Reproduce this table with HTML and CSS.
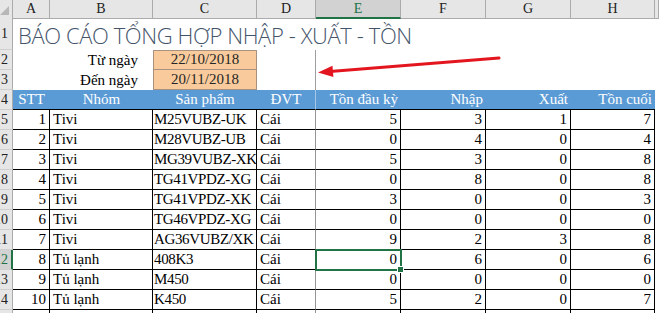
FILE: index.html
```html
<!DOCTYPE html>
<html lang="vi">
<head>
<meta charset="utf-8">
<title>Báo cáo tổng hợp</title>
<link rel="stylesheet" href="styles.css">
</head>
<body>
<div class="sheet">
  <div class="row r-hdr">
    <div class="corner"><svg class="corner-tri" width="13" height="18" viewBox="0 0 13 18"><polygon points="0,15 9,6 9,15" fill="#b7b7b7"/></svg></div>
    <div class="ch">A</div>
    <div class="ch">B</div>
    <div class="ch">C</div>
    <div class="ch">D</div>
    <div class="ch sel">E</div>
    <div class="ch">F</div>
    <div class="ch">G</div>
    <div class="ch">H</div>
    <div class="ch"></div>
  </div>

  <div class="row r-title">
    <div class="rh">1</div>
    <div class="title">BÁO CÁO TỔNG HỢP NHẬP - XUẤT - TỒN</div>
    <div class="blank"></div>
  </div>

  <div class="row">
    <div class="rh">2</div>
    <div class="blank"></div>
    <div class="label">Từ ngày</div>
    <div class="date date-top">22/10/2018</div>
    <div class="blank freeze"></div>
    <div class="blank"></div><div class="blank"></div><div class="blank"></div><div class="blank"></div><div class="blank"></div>
  </div>

  <div class="row">
    <div class="rh">3</div>
    <div class="blank"></div>
    <div class="label">Đến ngày</div>
    <div class="date">20/11/2018</div>
    <div class="blank freeze"></div>
    <div class="blank"></div><div class="blank"></div><div class="blank"></div><div class="blank"></div><div class="blank"></div>
  </div>

  <div class="row r-head">
    <div class="rh">4</div>
    <div class="th ctr">STT</div>
    <div class="th ctr">Nhóm</div>
    <div class="th ctr">Sản phẩm</div>
    <div class="th ctr th-freeze">ĐVT</div>
    <div class="th num">Tồn đầu kỳ</div>
    <div class="th num">Nhập</div>
    <div class="th num">Xuất</div>
    <div class="th num">Tồn cuối</div>
    <div class="blank"></div>
  </div>

  <div class="row"><div class="rh">5</div><div class="td num">1</div><div class="td txt">Tivi</div><div class="td code">M25VUBZ-UK</div><div class="td txt dv">Cái</div><div class="td num">5</div><div class="td num">3</div><div class="td num">1</div><div class="td num">7</div><div class="blank"></div></div>
  <div class="row"><div class="rh">6</div><div class="td num">2</div><div class="td txt">Tivi</div><div class="td code">M28VUBZ-UB</div><div class="td txt dv">Cái</div><div class="td num">0</div><div class="td num">4</div><div class="td num">0</div><div class="td num">4</div><div class="blank"></div></div>
  <div class="row"><div class="rh">7</div><div class="td num">3</div><div class="td txt">Tivi</div><div class="td code">MG39VUBZ-XK</div><div class="td txt dv">Cái</div><div class="td num">5</div><div class="td num">3</div><div class="td num">0</div><div class="td num">8</div><div class="blank"></div></div>
  <div class="row"><div class="rh">8</div><div class="td num">4</div><div class="td txt">Tivi</div><div class="td code">TG41VPDZ-XG</div><div class="td txt dv">Cái</div><div class="td num">0</div><div class="td num">8</div><div class="td num">0</div><div class="td num">8</div><div class="blank"></div></div>
  <div class="row"><div class="rh">9</div><div class="td num">5</div><div class="td txt">Tivi</div><div class="td code">TG41VPDZ-XK</div><div class="td txt dv">Cái</div><div class="td num">3</div><div class="td num">0</div><div class="td num">0</div><div class="td num">3</div><div class="blank"></div></div>
  <div class="row"><div class="rh">10</div><div class="td num">6</div><div class="td txt">Tivi</div><div class="td code">TG46VPDZ-XG</div><div class="td txt dv">Cái</div><div class="td num">0</div><div class="td num">0</div><div class="td num">0</div><div class="td num">0</div><div class="blank"></div></div>
  <div class="row"><div class="rh">11</div><div class="td num">7</div><div class="td txt">Tivi</div><div class="td code">AG36VUBZ/XK</div><div class="td txt dv">Cái</div><div class="td num">9</div><div class="td num">2</div><div class="td num">3</div><div class="td num">8</div><div class="blank"></div></div>
  <div class="row"><div class="rh rh-sel">12</div><div class="td num">8</div><div class="td txt">Tủ lạnh</div><div class="td code">408K3</div><div class="td txt dv">Cái</div><div class="td num active">0</div><div class="td num">6</div><div class="td num">0</div><div class="td num">6</div><div class="blank"></div></div>
  <div class="row"><div class="rh">13</div><div class="td num">9</div><div class="td txt">Tủ lạnh</div><div class="td code">M450</div><div class="td txt dv">Cái</div><div class="td num">0</div><div class="td num">0</div><div class="td num">0</div><div class="td num">0</div><div class="blank"></div></div>
  <div class="row"><div class="rh">14</div><div class="td num">10</div><div class="td txt">Tủ lạnh</div><div class="td code">K450</div><div class="td txt dv">Cái</div><div class="td num">5</div><div class="td num">2</div><div class="td num">0</div><div class="td num">7</div><div class="blank"></div></div>
  <div class="row"><div class="rh">15</div><div class="td"></div><div class="td"></div><div class="td"></div><div class="td dv"></div><div class="td"></div><div class="td"></div><div class="td"></div><div class="td"></div><div class="blank"></div></div>

  <svg class="arrow" width="659" height="313" viewBox="0 0 659 313">
    <line x1="499" y1="58" x2="330" y2="71.4" stroke="#e3161f" stroke-width="3" stroke-linecap="round"/>
    <polygon points="318,72.5 333.4,77 332.5,65.8" fill="#e3161f"/>
  </svg>
</div>
</body>
</html>
```

FILE: styles.css
```css
* { box-sizing: border-box; }
html, body { margin: 0; padding: 0; background: #fff; }
body { width: 659px; height: 313px; overflow: hidden; }

.sheet {
  position: relative;
  width: 659px;
  height: 313px;
  overflow: hidden;
  font-family: "Liberation Serif", "Times New Roman", serif;
  font-size: 15px;
  color: #000;
}

.row {
  display: grid;
  grid-template-columns: 13px 37px 103px 104px 59px 85px 85px 85px 84px 1fr;
  height: 20px;
}
.r-hdr { height: 18px; }
.r-title { height: 32px; }

/* column headers */
.corner {
  background: #e6e6e6;
  border-right: 1px solid #ababab;
  border-bottom: 1px solid #ababab;
  overflow: hidden;
}
.corner-tri { display: block; }
.ch {
  background: #e6e6e6;
  border-right: 1px solid #ababab;
  border-bottom: 1px solid #ababab;
  font-size: 14px;
  line-height: 17px;
  text-align: center;
  color: #222;
}
.ch.sel {
  background: #d2d2d2;
  color: #217346;
  border-bottom: 2px solid #217346;
}

/* row headers */
.rh {
  background: #e6e6e6;
  border-right: 1px solid #ababab;
  border-bottom: 1px solid #cfcfcf;
  display: flex;
  justify-content: flex-end;
  align-items: flex-end;
  padding: 0 4px 1px 0;
  font-size: 14px;
  line-height: 17px;
  color: #222;
  overflow: hidden;
  white-space: nowrap;
}
.r-title .rh { align-items: center; padding-bottom: 0; }
.rh-sel {
  background: #d2d2d2;
  color: #217346;
  border-right: 2px solid #217346;
  padding-right: 3px;
}

/* title */
.title {
  grid-column: 2 / 10;
  font-family: "Open Sans", "Liberation Sans", sans-serif;
  font-weight: 300;
  font-size: 22px;
  letter-spacing: -0.4px;
  color: #44546a;
  white-space: nowrap;
  padding-left: 5px;
  display: flex;
  align-items: flex-end;
  line-height: 28px;
  padding-bottom: 1px;
}

.freeze { border-right: 1px solid #9e9e9e; }

.label {
  text-align: right;
  padding-right: 15px;
  line-height: 19px;
  padding-top: 1px;
  white-space: nowrap;
}
.date {
  background: #f9cb9c;
  border: 1px solid #a8917e;
  border-top: none;
  text-align: center;
  line-height: 18px;
  color: #262626;
}
.date.date-top { border-top: 1px solid #a8917e; line-height: 17px; }

/* header band */
.th {
  background: #5b9bd5;
  color: #fff;
  border-bottom: 1px solid #000;
  line-height: 19px;
  white-space: nowrap;
  overflow: hidden;
}
.th.ctr { text-align: center; }
.th.num { text-align: right; padding-right: 3px; }
.th-freeze { border-right: 1px solid #a7c6e4; }

/* data cells */
.td {
  border-right: 1px solid #000;
  border-bottom: 1px solid #000;
  line-height: 19px;
  white-space: nowrap;
  overflow: hidden;
}
.td.num { text-align: right; padding-right: 3px; }
.td.txt { padding-left: 3px; }
.td.code { padding-left: 1px; letter-spacing: -0.35px; }
.td.dv { border-right-color: #959595; }

.td.active {
  position: relative;
  overflow: visible;
  outline: 2px solid #217346;
  outline-offset: -1px;
}
.td.active::after {
  content: "";
  position: absolute;
  right: -4px;
  bottom: -4px;
  width: 5px;
  height: 5px;
  background: #217346;
  border: 1px solid #fff;
  box-sizing: content-box;
}

.arrow {
  position: absolute;
  left: 0;
  top: 0;
  pointer-events: none;
}
```
